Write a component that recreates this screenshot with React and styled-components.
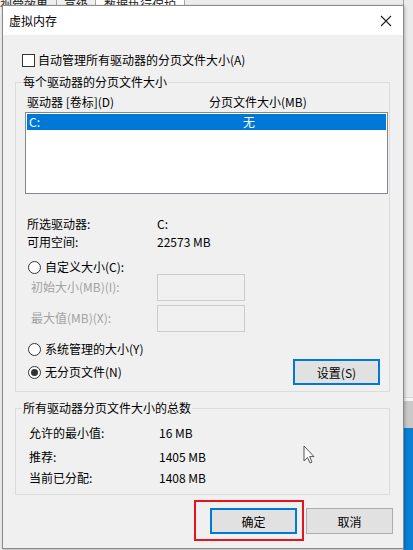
import React from 'react';
import styled, { createGlobalStyle, css } from 'styled-components';

const Global = createGlobalStyle`
  html, body { margin: 0; padding: 0; }
  body {
    font-family: "Noto Sans CJK SC", "Noto Sans", sans-serif;
    font-size: 12px;
    color: #000;
  }
`;

const Desktop = styled.div`
  position: relative;
  width: 413px;
  height: 550px;
  overflow: hidden;
  background: #ececec;
`;

const BackTabs = styled.div`
  position: absolute;
  left: -8px;
  top: -4px;
  display: flex;
  height: 18px;
`;

const BackTab = styled.div`
  display: flex;
  align-items: center;
  padding: 0 ${(p) => p.pad || 6}px;
  border-right: 1px solid #a8a8a8;
  background: ${(p) => (p.active ? '#fff' : '#f0f0f0')};
  line-height: 16px;
  color: #222;
`;

const BackEdge = styled.div`
  position: absolute;
  left: 403px;
  top: 0;
  width: 10px;
  height: 550px;
  display: flex;
  flex-direction: column;
  background: #eaeaea;
  border-left: 1px solid #9c9c9c;
`;

const EdgeFill = styled.div`
  flex: ${(p) => p.grow || 0} 0 ${(p) => p.h || 0}px;
  background: ${(p) => p.bg};
  border-top: ${(p) => (p.line ? '1px solid #d6d6d6' : 'none')};
`;

const Dialog = styled.div`
  position: absolute;
  left: 2px;
  top: 5px;
  width: 402px;
  height: 544px;
  box-sizing: border-box;
  border: 1px solid #8a8a8a;
  background: #f0f0f0;
  box-shadow: 1px 1px 3px rgba(0, 0, 0, 0.25);
  display: flex;
  flex-direction: column;
`;

const TitleBar = styled.div`
  height: 29px;
  flex: 0 0 29px;
  background: #fff;
  display: flex;
  align-items: center;
  justify-content: space-between;
  padding: 0 11px 0 6px;
`;

const Title = styled.span`
  font-size: 12px;
  line-height: 16px;
`;

const Body = styled.div`
  display: flex;
  flex-direction: column;
  padding: 0 10px 0 12px;
  position: relative;
  flex: 1;
`;

const Row = styled.div`
  display: flex;
  align-items: center;
  height: ${(p) => p.h || 16}px;
  margin-top: ${(p) => p.mt || 0}px;
  padding-left: ${(p) => p.pl || 0}px;
  line-height: 16px;
  white-space: nowrap;
  color: ${(p) => (p.disabled ? '#a2a2a2' : '#000')};
`;

const Check = styled.span`
  width: 13px;
  height: 13px;
  box-sizing: border-box;
  border: 1px solid #333;
  background: #fff;
  margin-right: 3px;
  flex: none;
`;

const Radio = styled.span`
  position: relative;
  width: 13px;
  height: 13px;
  box-sizing: border-box;
  border: 1px solid #333;
  border-radius: 50%;
  background: #fff;
  margin-right: 4px;
  flex: none;
  ${(p) =>
    p.checked &&
    css`
      &::after {
        content: '';
        position: absolute;
        left: 2px;
        top: 2px;
        width: 7px;
        height: 7px;
        border-radius: 50%;
        background: #333;
      }
    `}
`;

const Group = styled.div`
  position: relative;
  width: 375px;
  box-sizing: border-box;
  border: 1px solid #dcdcdc;
  margin-top: ${(p) => p.mt}px;
  padding: ${(p) => p.pad};
  display: flex;
  flex-direction: column;
`;

const Legend = styled.span`
  position: absolute;
  left: 6px;
  top: -9px;
  padding: 0 1px;
  background: #f0f0f0;
  line-height: 16px;
  white-space: nowrap;
`;

const Col = styled.span`
  display: inline-block;
  width: ${(p) => p.w}px;
  flex: none;
`;

const ListBox = styled.div`
  width: 363px;
  height: 82px;
  box-sizing: border-box;
  border: 1px solid #828790;
  background: #fff;
  margin: 2px 0 0 9px;
  padding: 1px;
`;

const ListItem = styled.div`
  display: flex;
  align-items: center;
  height: 16px;
  padding-left: 2px;
  background: ${(p) => (p.selected ? '#0078d7' : 'transparent')};
  color: ${(p) => (p.selected ? '#fff' : '#000')};
  line-height: 16px;
`;

const Field = styled.div`
  width: 88px;
  height: 27px;
  box-sizing: border-box;
  border: 1px solid #cccccc;
  background: #f0f0f0;
  flex: none;
`;

const Button = styled.button`
  width: ${(p) => p.w || 87}px;
  height: 26px;
  box-sizing: border-box;
  font-family: inherit;
  font-size: 12px;
  color: #000;
  background: #e1e1e1;
  border: 1px solid ${(p) => (p.primary ? '#0078d7' : '#adadad')};
  box-shadow: ${(p) => (p.primary ? 'inset 0 0 0 1px #0078d7' : 'none')};
  padding: 0;
  margin: 0;
  flex: none;
`;

const Footer = styled.div`
  display: flex;
  justify-content: flex-end;
  gap: 9px;
  margin-top: 13px;
  padding-right: 0;
`;

const Marked = styled.span`
  position: relative;
  display: flex;
  &::after {
    content: '';
    position: absolute;
    left: -16px;
    top: -8px;
    right: -7px;
    bottom: -7px;
    border: 2px solid #e3141e;
  }
`;

const Pointer = styled.svg`
  position: absolute;
  left: 303px;
  top: 445px;
`;

function CloseIcon() {
  return (
    <svg width="12" height="12" viewBox="0 0 12 12">
      <path d="M1 1 L11 11 M11 1 L1 11" stroke="#222" strokeWidth="1.1" fill="none" />
    </svg>
  );
}

function Info({ label, value, mt, pl = 11, vx = 130 }) {
  return (
    <Row mt={mt} pl={pl}>
      <Col w={vx}>{label}</Col>
      <span>{value}</span>
    </Row>
  );
}

export default function App() {
  return (
    <Desktop>
      <Global />
      <BackTabs>
        <BackTab pad={8}>视觉效果</BackTab>
        <BackTab pad={7}>高级</BackTab>
        <BackTab pad={8} active>数据执行保护</BackTab>
      </BackTabs>
      <BackEdge>
        <EdgeFill grow={1} bg="#ebebeb" />
        <EdgeFill h={3} bg="#f4f4f4" line />
        <EdgeFill h={27} bg="#c9c9c9" />
        <EdgeFill h={122} bg="#0a7fd6" />
      </BackEdge>

      <Dialog>
        <TitleBar>
          <Title>虚拟内存</Title>
          <CloseIcon />
        </TitleBar>
        <Body>
          <Row mt={17} pl={7} h={16}>
            <Check />
            自动管理所有驱动器的分页文件大小(A)
          </Row>

          <Group mt={14} pad="11px 0 6px 0">
            <Legend>每个驱动器的分页文件大小</Legend>
            <Row pl={11}>
              <Col w={182}>驱动器 [卷标](D)</Col>
              <span>分页文件大小(MB)</span>
            </Row>
            <ListBox>
              <ListItem selected>
                <Col w={214}>C:</Col>
                <span>无</span>
              </ListItem>
            </ListBox>

            <Info label="所选驱动器:" value="C:" mt={22} />
            <Info label="可用空间:" value="22573 MB" mt={2} />

            <Row mt={10} pl={12} h={14}>
              <Radio />
              自定义大小(C):
            </Row>
            <Row mt={-1} pl={15} h={28} disabled>
              <Col w={126}>初始大小(MB)(I):</Col>
              <Field />
            </Row>
            <Row mt={3} pl={15} h={28} disabled>
              <Col w={126}>最大值(MB)(X):</Col>
              <Field />
            </Row>
            <Row mt={10} pl={12} h={14}>
              <Radio />
              系统管理的大小(Y)
            </Row>
            <Row mt={3} pl={12} h={26}>
              <Radio checked />
              <span style={{ flex: 1 }}>无分页文件(N)</span>
              <Button primary style={{ marginRight: 9 }}>设置(S)</Button>
            </Row>
          </Group>

          <Group mt={16} pad="16px 0 8px 0">
            <Legend>所有驱动器分页文件大小的总数</Legend>
            <Info label="允许的最小值:" value="16 MB" pl={13} />
            <Info label="推荐:" value="1405 MB" mt={8} pl={13} />
            <Info label="当前已分配:" value="1408 MB" mt={5} pl={13} />
          </Group>

          <Footer>
            <Marked>
              <Button primary>确定</Button>
            </Marked>
            <Button>取消</Button>
          </Footer>
        </Body>
      </Dialog>

      <Pointer width="12" height="19" viewBox="0 0 12 19">
        <path d="M1 1 L1 16 L4.5 12.5 L7 18 L9 17 L6.6 11.6 L11 11.6 Z" fill="#fff" stroke="#555" strokeWidth="1" strokeLinejoin="round" />
      </Pointer>
    </Desktop>
  );
}
